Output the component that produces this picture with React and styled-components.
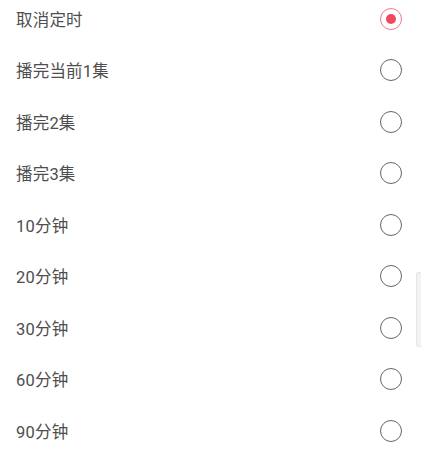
import styled, { createGlobalStyle } from "styled-components"
import { useState } from "react"

const GlobalStyle = createGlobalStyle`
	html, body {
		margin: 0;
		padding: 0;
		background: #fff;
		overflow: hidden;
	}
	body {
		font-family: Roboto, "Noto Sans CJK SC", sans-serif;
	}
`

const Sheet = styled.div`
	position: relative;
	width: 421px;
	height: 450px;
	overflow: hidden;
	background: #fff;
`

const List = styled.ul`
	list-style: none;
	margin: -7px 0 0;
	padding: 0;
`

const Row = styled.li`
	display: flex;
	align-items: center;
	justify-content: space-between;
	height: 51.5px;
	padding: 0 19px 0 16px;
	cursor: pointer;
`

const Label = styled.span`
	font-size: 16.5px;
	color: #4e4e4e;
	letter-spacing: 0.2px;
`

const Radio = styled.span`
	box-sizing: border-box;
	width: 22px;
	height: 22px;
	border-radius: 50%;
	border: 1.5px solid ${(p) => (p.$checked ? "#f27a89" : "#666")};
	display: flex;
	align-items: center;
	justify-content: center;

	&::after {
		content: "";
		width: 10px;
		height: 10px;
		border-radius: 50%;
		background: #f2485e;
		display: ${(p) => (p.$checked ? "block" : "none")};
	}
`

const ScrollThumb = styled.div`
	position: absolute;
	right: 0;
	top: 272px;
	width: 4px;
	height: 73px;
	background: #f3f3f3;
	border: 1px solid #e6e6e6;
	border-right: none;
	border-radius: 3px 0 0 3px;
`

const options = ["取消定时", "播完当前1集", "播完2集", "播完3集", "10分钟", "20分钟", "30分钟", "60分钟", "90分钟"]

export default function App() {
	const [selected, setSelected] = useState(0)
	return (
		<Sheet>
			<GlobalStyle />
			<List>
				{options.map((opt, i) => (
					<Row key={opt} onClick={() => setSelected(i)}>
						<Label>{opt}</Label>
						<Radio $checked={selected === i} />
					</Row>
				))}
			</List>
			<ScrollThumb />
		</Sheet>
	)
}
